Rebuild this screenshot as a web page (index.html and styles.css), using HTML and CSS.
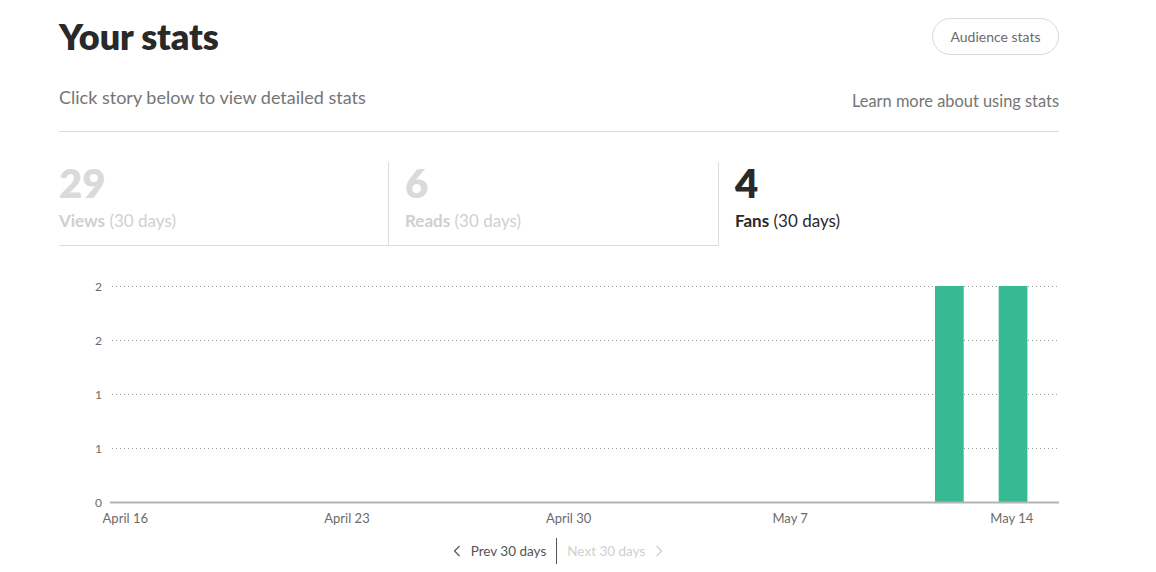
FILE: index.html
```html
<!DOCTYPE html>
<html lang="en">
<head>
<meta charset="utf-8">
<title>Your stats</title>
<link rel="stylesheet" href="styles.css">
</head>
<body>
<main class="page">
  <header class="head">
    <h1 class="title">Your stats</h1>
    <button class="pill">Audience stats</button>
  </header>
  <div class="sub">
    <p class="sub-text">Click story below to view detailed stats</p>
    <a class="sub-link" href="#">Learn more about using stats</a>
  </div>
  <div class="tabs">
    <div class="tab">
      <div class="tab-num">29</div>
      <div class="tab-label"><b>Views</b> (30 days)</div>
    </div>
    <div class="tab">
      <div class="tab-num">6</div>
      <div class="tab-label"><b>Reads</b> (30 days)</div>
    </div>
    <div class="tab active">
      <div class="tab-num">4</div>
      <div class="tab-label"><b>Fans</b> (30 days)</div>
    </div>
  </div>
  <div class="chart">
    <svg class="chart-svg" width="1000" height="270" viewBox="0 0 1000 270">
      <g class="grid">
        <line x1="53" y1="20.5" x2="1000" y2="20.5"/>
        <line x1="53" y1="74.5" x2="1000" y2="74.5"/>
        <line x1="53" y1="128.5" x2="1000" y2="128.5"/>
        <line x1="53" y1="182.5" x2="1000" y2="182.5"/>
      </g>
      <g class="ylabels">
        <text x="43" y="24.5">2</text>
        <text x="43" y="78.5">2</text>
        <text x="43" y="132.5">1</text>
        <text x="43" y="186.5">1</text>
        <text x="43" y="240.5">0</text>
      </g>
      <g class="bars">
        <rect x="876" y="20" width="28.7" height="216"/>
        <rect x="939.7" y="20" width="28.7" height="216"/>
      </g>
      <line class="axis" x1="51" y1="236.5" x2="1000" y2="236.5"/>
      <g class="xlabels">
        <text x="66.3" y="257">April 16</text>
        <text x="288" y="257">April 23</text>
        <text x="509.6" y="257">April 30</text>
        <text x="731.2" y="257">May 7</text>
        <text x="952.8" y="257">May 14</text>
      </g>
    </svg>
  </div>
  <nav class="pager">
    <a class="pager-btn" href="#">
      <svg class="chev" width="8" height="12" viewBox="0 0 8 12"><path d="M6.5 1 L1.5 6 L6.5 11"/></svg>
      <span>Prev 30 days</span>
    </a>
    <span class="pager-sep"></span>
    <a class="pager-btn disabled" href="#">
      <span>Next 30 days</span>
      <svg class="chev" width="8" height="12" viewBox="0 0 8 12"><path d="M1.5 1 L6.5 6 L1.5 11"/></svg>
    </a>
  </nav>
</main>
</body>
</html>
```
FILE: styles.css
```css
* { box-sizing: border-box; }
html, body { margin: 0; padding: 0; background: #fff; }
body {
  font-family: Lato, "Noto Sans", "Liberation Sans", sans-serif;
  color: #292929;
}
.page {
  width: 1000px;
  margin-left: 59px;
  padding-top: 15px;
}
.head {
  display: flex;
  justify-content: space-between;
  align-items: center;
  height: 43px;
}
.title {
  margin: 0;
  font-size: 36px;
  line-height: 43px;
  font-weight: 800;
  color: #292929;
  letter-spacing: -0.1px;
}
.pill {
  font: inherit;
  font-size: 14px;
  color: #6b6b6b;
  background: #fff;
  border: 1px solid #d9d9d9;
  border-radius: 20px;
  height: 37px;
  width: 127px;
  padding: 0;
}
.sub {
  display: flex;
  justify-content: space-between;
  align-items: flex-end;
  margin-top: 26px;
  padding-bottom: 21px;
  border-bottom: 1px solid #dcdcdc;
}
.sub-text {
  margin: 0;
  font-size: 18px;
  line-height: 26px;
  color: #757575;
}
.sub-link {
  font-size: 16.4px;
  line-height: 22px;
  color: #757575;
  text-decoration: none;
  margin-bottom: -2px;
}
.tabs {
  display: flex;
  margin-top: 30px;
}
.tab {
  width: 330px;
  height: 84px;
  padding: 0 16px;
  border-right: 1px solid #dcdcdc;
  border-bottom: 1px solid #dcdcdc;
  color: #d0d0d0;
}
.tab:first-child { padding-left: 0; }
.tab.active {
  border: none;
  color: #292929;
}
.tab-num {
  font-size: 40px;
  line-height: 44px;
  font-weight: 800;
  margin-top: -1px;
  color: #dadada;
}
.tab.active .tab-num { color: #292929; }
.tab-label {
  font-size: 17px;
  line-height: 22px;
  margin-top: 5px;
}
.tab-label b { font-weight: 700; }
.chart {
  margin-top: 20px;
  height: 270px;
}
.chart-svg { display: block; }
.grid line {
  stroke: #9a9a9a;
  stroke-width: 1;
  stroke-dasharray: 1 3;
}
.axis { stroke: #b3b3b3; stroke-width: 2; }
.bars rect { fill: #37b994; }
.ylabels text {
  font-family: Lato, "Noto Sans", sans-serif;
  font-size: 12px;
  fill: #6b6b6b;
  text-anchor: end;
}
.xlabels text {
  font-family: Lato, "Noto Sans", sans-serif;
  font-size: 13px;
  fill: #6b6b6b;
  text-anchor: middle;
}
.pager {
  display: flex;
  justify-content: center;
  align-items: center;
  margin-top: 2px;
  height: 26px;
  padding-right: 2px;
}
.pager-btn {
  display: flex;
  align-items: center;
  gap: 10px;
  font-size: 13.5px;
  color: #555;
  text-decoration: none;
  padding: 0 10px;
}
.pager-btn.disabled { color: #cfcfcf; }
.chev path {
  fill: none;
  stroke: currentColor;
  stroke-width: 1.2;
}
.pager-sep {
  width: 1px;
  height: 26px;
  background: #555;
}
```
